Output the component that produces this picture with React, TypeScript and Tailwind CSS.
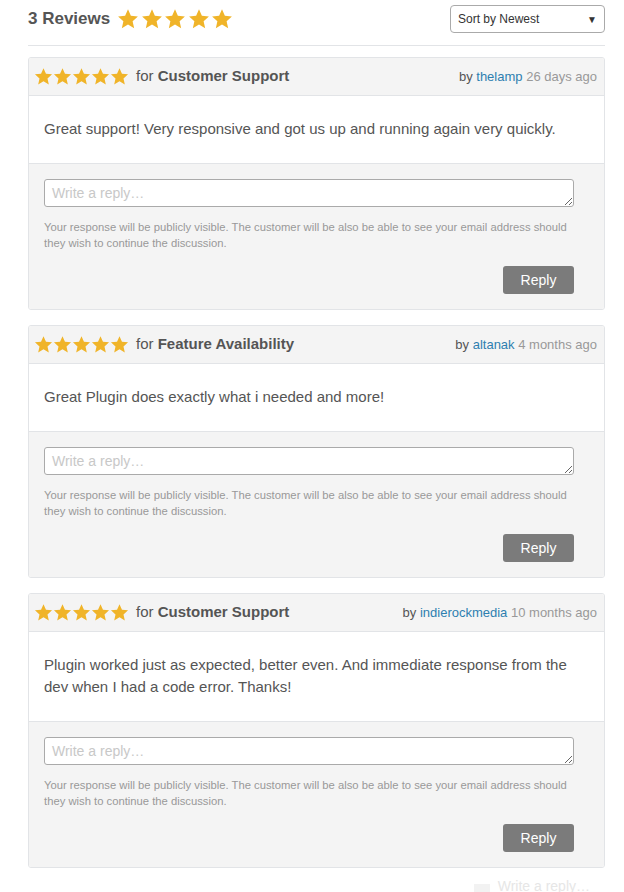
import React from 'react';

const reviews = [
  {
    topic: 'Customer Support',
    author: 'thelamp',
    when: '26 days ago',
    text: 'Great support! Very responsive and got us up and running again very quickly.',
  },
  {
    topic: 'Feature Availability',
    author: 'altanak',
    when: '4 months ago',
    text: 'Great Plugin does exactly what i needed and more!',
  },
  {
    topic: 'Customer Support',
    author: 'indierockmedia',
    when: '10 months ago',
    text: 'Plugin worked just as expected, better even. And immediate response from the dev when I had a code error. Thanks!',
  },
];

const Star = ({ size }: { size: number }) => (
  <svg width={size} height={size} viewBox="0 0 20 20" className="shrink-0">
    <path
      fill="#f0b429"
      d="M10 1.2l2.6 5.9 6.4.6-4.8 4.3 1.4 6.3L10 15l-5.6 3.3 1.4-6.3L1 7.7l6.4-.6z"
    />
  </svg>
);

const Stars = ({ size, gap }: { size: number; gap: string }) => (
  <div className={`flex items-center ${gap}`}>
    {[0, 1, 2, 3, 4].map((i) => (
      <Star key={i} size={size} />
    ))}
  </div>
);

const ReviewCard = ({ review }: { review: (typeof reviews)[number] }) => (
  <div className="border border-[#e2e4e7] rounded-[3px] overflow-hidden">
    <div className="h-[38px] bg-[#f4f4f4] border-b border-[#e2e4e7] flex items-center justify-between pl-[5px] pr-[7px]">
      <div className="flex items-center">
        <Stars size={19} gap="gap-0" />
        <span className="ml-[7px] text-[15px] text-[#555]">
          for <b className="font-bold">{review.topic}</b>
        </span>
      </div>
      <div className="text-[13px]">
        <span className="text-[#555]">by </span>
        <span className="text-[#2e7fb0]">{review.author}</span>
        <span className="text-[#999]"> {review.when}</span>
      </div>
    </div>
    <div className="bg-white px-[15px] pt-[22px] pb-[23px] text-[15px] leading-[22px] text-[#555] border-b border-[#e2e4e7]">
      {review.text}
    </div>
    <div className="bg-[#f4f4f4] px-[15px] pt-[15px] pb-[15px]">
      <div className="mr-[15px] relative">
        <textarea
          rows={1}
          placeholder="Write a reply…"
          className="block w-full h-[28px] resize-y border border-[#aaa] rounded-[3px] bg-white px-[7px] py-[3px] text-[14px] leading-[20px] placeholder:text-[#c8c8c8] outline-none"
        />
      </div>
      <p className="mt-[12px] text-[11.25px] leading-[16px] text-[#999] pr-[20px]">
        Your response will be publicly visible. The customer will be also be able to see your email address should they wish to continue the discussion.
      </p>
      <div className="flex justify-end mt-[15px] mr-[15px]">
        <button className="w-[71px] h-[28px] bg-[#7b7b7b] text-white text-[14px] rounded-[3px]">
          Reply
        </button>
      </div>
    </div>
  </div>
);

export default function App() {
  return (
    <div className="w-[624px] h-[892px] bg-white overflow-hidden font-['Liberation_Sans',Arial,sans-serif]">
      <div className="ml-[28px] w-[577px]">
        <div className="flex items-center justify-between pt-[5px] pb-[12px] border-b border-[#e2e4e7]">
          <div className="flex items-center">
            <span className="text-[17px] font-bold text-[#555]">3 Reviews</span>
            <div className="ml-[7px]">
              <Stars size={22} gap="gap-[1.5px]" />
            </div>
          </div>
          <div className="w-[155px] h-[28px] border border-[#aaa] rounded-[4px] flex items-center justify-between pl-[7px] pr-[7px] text-[12px] text-[#333]">
            <span>Sort by Newest</span>
            <span className="text-[10px]">▼</span>
          </div>
        </div>
        <div className="mt-[11px] flex flex-col gap-[15px]">
          {reviews.map((r, i) => (
            <ReviewCard key={i} review={r} />
          ))}
        </div>
        <div className="mt-[10px] flex justify-end pr-[15px] text-[14px] leading-[16px] text-[#e6e6e6]">
          <span className="w-[16px] h-[10px] bg-[#f2f2f2] mr-[8px] mt-[6px]" />
          Write a reply…
        </div>
      </div>
    </div>
  );
}
